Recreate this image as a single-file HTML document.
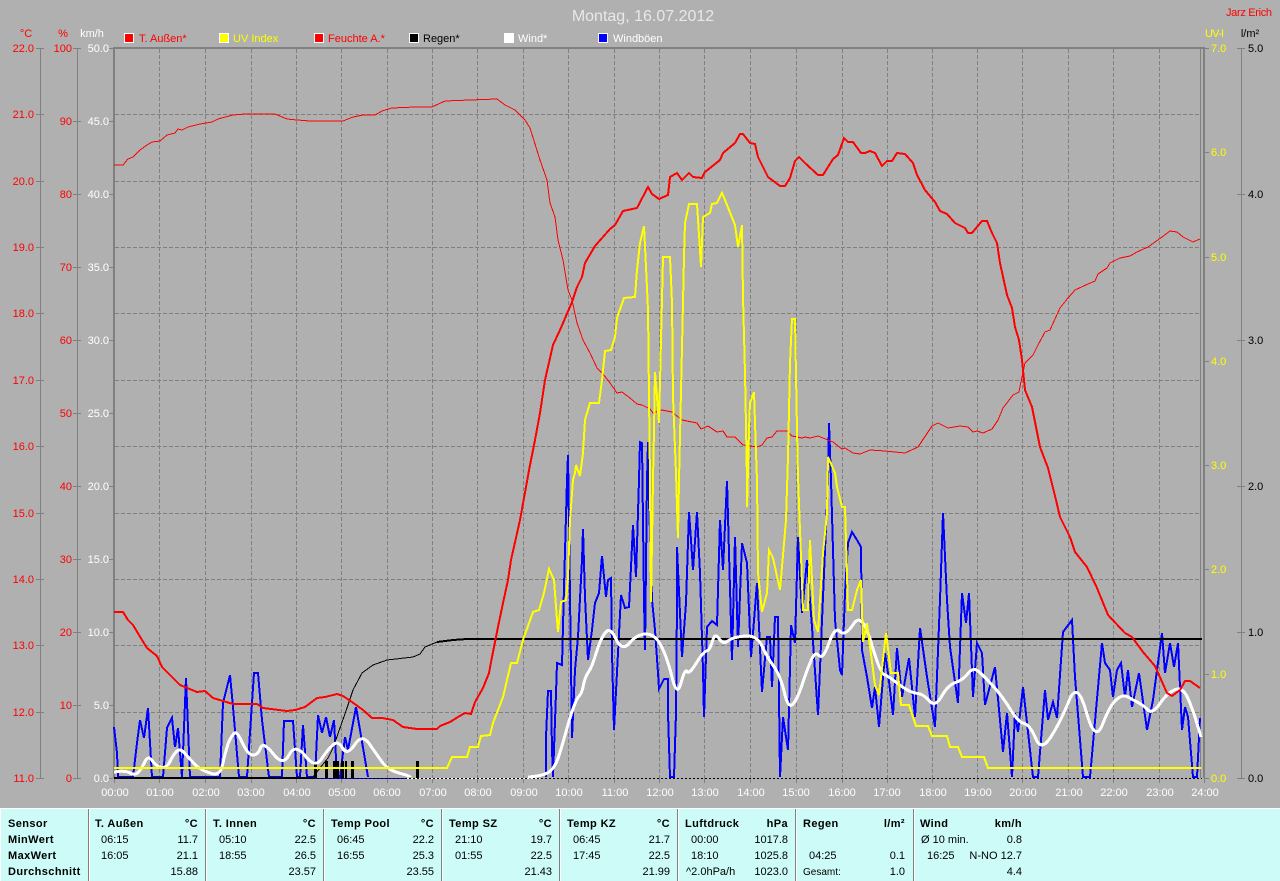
<!DOCTYPE html>
<html><head><meta charset="utf-8"><title>Montag, 16.07.2012</title>
<style>
html,body{margin:0;padding:0;background:#b0b0b0;width:1280px;height:881px;overflow:hidden}
svg{display:block;position:absolute;left:0;top:0}
text{font-family:"Liberation Sans",sans-serif;font-size:11px}
.e{text-anchor:end}.m{text-anchor:middle}
.b{font-weight:bold;letter-spacing:.4px;fill:#000}
.k{fill:#000}
.r{fill:#f00}.w{fill:#fff}.y{fill:#ff0}
polyline{fill:none;stroke-linejoin:miter}
.c{shape-rendering:crispEdges}
</style></head><body>
<svg width="1280" height="881" viewBox="0 0 1280 881" xmlns="http://www.w3.org/2000/svg">
<rect width="1280" height="881" fill="#b0b0b0"/>
<!-- grid -->
<path class="c" stroke="#808080" stroke-width="1" stroke-dasharray="4 2" fill="none" d="M159.5 49V778M205.5 49V778M251.5 49V778M296.5 49V778M341.5 49V778M387.5 49V778M432.5 49V778M477.5 49V778M523.5 49V778M568.5 49V778M614.5 49V778M659.5 49V778M704.5 49V778M750.5 49V778M796.5 49V778M842.5 49V778M887.5 49V778M932.5 49V778M977.5 49V778M1022.5 49V778M1068.5 49V778M1113.5 49V778M1159.5 49V778M115 114.5H1200M115 181.5H1200M115 247.5H1200M115 313.5H1200M115 380.5H1200M115 446.5H1200M115 513.5H1200M115 579.5H1200M115 645.5H1200M115 712.5H1200"/>
<!-- frame + axes -->
<g class="c" fill="#808080">
<rect x="113" y="47" width="1092" height="2"/>
<rect x="113" y="47" width="2" height="731"/>
<rect x="1203" y="47" width="2" height="731"/>
<rect x="1200" y="49" width="1" height="729"/>
<rect x="40" y="48" width="1" height="730"/>
<rect x="77" y="48" width="1" height="730"/>
<rect x="1241" y="48" width="1" height="730"/>
</g>
<path class="c" stroke="#808080" fill="none" d="M36 48.5H44M36 114.5H44M36 181.5H44M36 247.5H44M36 313.5H44M36 380.5H44M36 446.5H44M36 513.5H44M36 579.5H44M36 645.5H44M36 712.5H44M36 778.5H44M73 48.5H81M73 121.5H81M73 194.5H81M73 267.5H81M73 340.5H81M73 413.5H81M73 486.5H81M73 559.5H81M73 632.5H81M73 705.5H81M73 778.5H81M109 48.5H113M109 121.5H113M109 194.5H113M109 267.5H113M109 340.5H113M109 413.5H113M109 486.5H113M109 559.5H113M109 632.5H113M109 705.5H113M109 778.5H113M1205 48.5H1209M1205 152.5H1209M1205 257.5H1209M1205 361.5H1209M1205 465.5H1209M1205 569.5H1209M1205 674.5H1209M1205 778.5H1209M1237 48.5H1245M1237 194.5H1245M1237 340.5H1245M1237 486.5H1245M1237 632.5H1245M1237 778.5H1245M114.5 778V783M159.5 778V783M205.5 778V783M251.5 778V783M296.5 778V783M341.5 778V783M387.5 778V783M432.5 778V783M477.5 778V783M523.5 778V783M568.5 778V783M614.5 778V783M659.5 778V783M704.5 778V783M750.5 778V783M796.5 778V783M842.5 778V783M887.5 778V783M932.5 778V783M977.5 778V783M1022.5 778V783M1068.5 778V783M1113.5 778V783M1159.5 778V783M1204.5 778V783"/>
<!-- blue Windböen -->
<polyline class="c" stroke="#0000ff" stroke-width="2" points="114,727 117,753 118,777 133,777 137,743 140,720 144,738 148,708 152,777 163,777 167,728 172,718 175,747 178,728 182,777 186,678 190,777 220,777 223,703 230,675 233,707 239,777 247,777 254,673 258,673 262,720 269,777 282,777 284,721 293,721 297,777 300,777 303,725 307,777 315,777 318,715 322,733 326,717 330,737 334,720 337,777 340,777 345,737 348,750 356,707 360,730 368,777"/>
<polyline class="c" stroke="#0000ff" stroke-width="2" points="546,777 546,737 548,691 551,691 552,750 553,777 556,693 557,663 562,665 564,587 567,480 568,455 570,597 572,738 575,670 578,637 582,560 583,529 585,597 588,660 592,630 595,603 599,593 602,556 606,597 608,580 611,578 612,653 614,730 618,653 621,595 625,608 629,607 631,567 633,525 636,577 639,480 640,442 642,443 644,600 645,650 647,480 648,442 649,500 652,600 655,630 658,673 659,689 664,679 668,679 668,713 670,777 674,777 676,713 677,603 677,547 682,657 686,603 689,512 691,540 693,570 697,512 700,573 703,670 704,717 707,627 712,621 717,625 720,520 723,570 727,481 732,660 735,537 738,647 742,543 747,563 751,657 753,633 757,583 762,692 767,637 770,637 772,687 775,617 778,617 780,777 783,717 788,750 791,625 795,643 798,537 802,613 807,560 812,627 818,715 823,597 828,480 829,423 831,480 835,620 840,670 842,675 845,593 848,543 852,532 857,540 861,547 862,650 867,677 872,708 875,687 879,727 885,653 888,673 893,715 897,648 902,697 909,658 915,717 920,628 927,677 935,727 940,600 943,513 947,600 950,647 958,703 962,593 966,623 969,593 973,697 977,643 982,653 985,705 995,667 1003,752 1007,713 1012,777 1015,713 1018,732 1023,687 1027,723 1033,777 1038,777 1045,690 1048,720 1053,702 1057,718 1063,632 1072,620 1075,677 1083,777 1090,777 1102,643 1105,663 1110,670 1113,697 1117,670 1121,663 1125,697 1128,670 1132,707 1139,673 1147,730 1153,700 1162,633 1165,673 1170,643 1174,667 1178,643 1182,730 1185,707 1188,717 1193,777 1197,777 1200,718"/>
<!-- baseline -->
<rect class="c" x="114" y="777" width="199" height="2" fill="#000"/>
<rect class="c" x="313" y="778" width="94" height="1" fill="#00f"/>
<rect class="c" x="407" y="778" width="133" height="1" fill="#fff"/>
<path class="c" stroke="#000" stroke-dasharray="2 2" fill="none" d="M313 778.5H1202"/>
<!-- black rain -->
<polyline class="c" stroke="#000" stroke-width="1" points="313,777 320,768 328,758 333,748 340,728 347,708 353,690 362,673 373,665 387,660 413,657 420,654 425,647 437,642"/>
<polyline class="c" stroke="#000" stroke-width="2" points="437,642 453,640 467,639 1202,639"/>
<g class="c" fill="#000"><rect x="314" y="761" width="3" height="17"/><rect x="325" y="761" width="3" height="17"/><rect x="333" y="761" width="6" height="17"/><rect x="341" y="761" width="3" height="17"/><rect x="345" y="761" width="2" height="17"/><rect x="351" y="761" width="3" height="17"/><rect x="416" y="761" width="3" height="17"/></g>
<!-- white Wind -->
<path class="c" stroke="#fff" stroke-width="3" fill="none" d="M114 772Q125 770 130 773Q135 776 138.5 772Q142 768 145 761.5Q148 755 152.5 761Q157 767 162 767.5Q167 768 170 761.5Q173 755 176.5 751.5Q180 748 184 752.5Q188 757 194 763.5Q200 770 210 773Q220 777 222.5 765Q225 753 228.5 742.5Q232 735 234.5 733Q237 731 242.5 743Q248 755 253 755Q258 755 260.5 748Q263 741 273 753.5Q283 767 289 755Q295 743 305 755.5Q315 769 321.5 759Q328 749 333 745Q338 740 342.5 748Q347 756 354.5 745Q362 733 369.5 744Q377 755 382.5 762.5Q388 770 399 773Q410 776 410 777"/>
<path class="c" stroke="#fff" stroke-width="3" fill="none" d="M528 777Q543 776 549 772Q555 768 559 755.5Q563 743 566.5 730Q570 717 573.5 707.5Q577 698 579.5 695.5Q582 693 583.5 685Q585 677 588.5 672Q592 667 596 653.5Q600 640 605 633Q610 626 616 639Q622 652 629.5 643Q637 634 646 634Q655 634 661 645.5Q667 657 672 677Q677 698 681 683Q685 668 687 671.5Q689 675 696 663.5Q703 652 706.5 651Q710 650 712.5 641Q715 632 719 638.5Q723 645 728 641Q733 637 745 636Q757 635 762 646Q767 657 773.5 666Q780 675 784 691Q788 709 792.5 704.5Q797 700 802 685Q807 670 811 660.5Q815 651 819 655.5Q823 660 829 643Q835 626 840 631.5Q845 637 853.5 624Q862 611 871 642Q880 673 884 674.5Q888 676 895 681.5Q902 687 907.5 690Q913 693 918 693.5Q923 694 929 700.5Q935 708 941.5 696.5Q948 685 955.5 682.5Q963 680 968 673.5Q973 667 978 671Q983 675 993 686Q1003 697 1010.5 709.5Q1018 722 1024 723.5Q1030 725 1035.5 738Q1041 752 1050.5 737.5Q1060 723 1068.5 702Q1077 679 1086 711Q1095 744 1102.5 724.5Q1110 705 1116.5 699.5Q1123 694 1128 697Q1133 700 1138 702.5Q1143 705 1147.5 709.5Q1152 715 1160 703.5Q1168 692 1175.5 689.5Q1183 687 1188 698.5Q1193 710 1197 723.5Q1201 737 1201 737"/>
<!-- thin red -->
<polyline class="c" stroke="#f00" stroke-width="1" points="114,165 123,165 128,159 133,157 140,150 147,145 152,142 160,141 167,135 175,133 178,129 182,130 188,127 200,124 212,122 218,119 233,115 245,114 275,114 287,119 297,120 310,121 343,121 353,117 363,115 375,115 382,111 392,108 415,107 432,107 445,101 470,100 497,99 505,105 515,110 525,120 530,128 540,160 547,180 550,203 555,217 558,240 563,260 568,290 572,300 577,323 583,340 590,353 597,368 603,374 610,383 617,393 622,392 630,398 637,404 642,405 650,409 653,413 662,410 672,412 682,420 697,423 701,429 708,426 717,432 723,431 727,437 735,437 743,445 757,447 762,445 767,438 772,437 777,431 787,431 792,436 797,437 802,438 805,437 810,438 818,436 823,438 833,442 842,449 845,448 853,453 860,454 870,450 885,451 905,453 918,447 932,426 938,423 948,428 960,426 968,427 973,432 977,431 983,433 992,429 998,420 1003,408 1013,395 1019,392 1022,377 1025,363 1033,355 1038,345 1045,332 1050,330 1060,308 1068,298 1075,290 1088,284 1095,281 1098,274 1107,268 1110,263 1120,258 1130,256 1137,252 1148,247 1162,237 1170,231 1177,232 1183,237 1193,242 1200,239"/>
<!-- yellow UV -->
<polyline class="c" stroke="#ff0" stroke-width="2" points="114,768 447,768 452,757 467,757 470,747 478,747 481,736 490,735 493,723 503,697 511,663 517,663 523,640 533,612 539,610 544,593 549,569 554,580 557,620 558,632 561,602 566,600 568,577 570,520 573,480 575,473 576,465 580,476 583,453 585,420 587,413 590,403 599,403 602,380 605,351 611,350 615,337 617,318 624,298 635,297 637,270 640,243 644,226 646,267 648,310 650,480 651,602 653,480 654,430 655,372 657,397 659,423 661,340 663,257 670,257 672,303 673,397 676,473 678,538 679,480 682,347 684,257 685,223 689,204 697,204 700,250 701,267 703,217 710,213 712,204 717,203 722,193 725,200 735,225 738,247 742,225 743,297 745,373 747,480 747,507 749,430 750,403 754,392 756,453 757,480 758,573 762,612 767,593 769,550 773,558 780,590 786,520 788,457 790,363 792,319 795,319 797,430 798,477 800,530 803,610 808,610 810,540 814,620 818,632 823,553 827,513 828,457 835,473 837,487 842,507 845,507 848,610 852,610 857,590 861,580 863,642 867,623 875,685 879,695 886,633 891,673 898,673 901,705 909,705 916,726 928,726 932,736 947,736 950,747 958,747 962,757 984,757 988,768 1201,768"/>
<!-- thick red -->
<polyline class="c" stroke="#f00" stroke-width="2" points="114,612 123,612 128,620 133,625 142,640 147,648 157,656 162,667 172,677 180,685 197,692 205,691 213,698 233,704 257,704 263,708 287,711 295,710 305,707 317,698 325,697 337,694 343,696 352,702 363,710 372,718 382,718 393,720 403,727 417,729 437,729 440,726 450,722 458,717 465,713 471,714 475,702 483,688 489,673 492,657 498,627 503,603 508,580 511,560 520,520 530,465 535,440 540,413 545,380 553,345 560,330 572,302 577,287 582,277 585,263 595,246 610,229 615,225 623,211 637,208 648,187 652,194 659,199 668,195 670,177 677,173 682,180 689,173 693,177 702,178 705,172 720,160 723,153 735,143 740,134 743,134 750,143 755,144 758,157 768,177 780,186 785,186 790,178 795,161 799,157 805,163 818,175 823,175 833,159 838,155 844,138 848,142 853,142 861,153 865,153 870,151 875,153 882,166 887,161 892,161 897,153 905,154 913,163 917,175 925,190 935,202 940,211 947,214 955,223 965,228 968,233 972,233 982,221 987,221 992,233 997,243 1000,263 1007,295 1012,308 1015,327 1019,340 1022,360 1025,390 1032,407 1040,447 1048,468 1056,500 1060,517 1070,537 1075,552 1087,567 1097,588 1108,615 1125,633 1132,637 1143,652 1155,666 1167,693 1172,696 1180,690 1185,681 1190,681 1200,688"/>
<!-- legend -->
<g class="c" stroke="#fff" stroke-width="1">
<rect x="124.5" y="33.5" width="9" height="9" fill="#f00"/>
<rect x="219.5" y="33.5" width="9" height="9" fill="#ff0"/>
<rect x="314.5" y="33.5" width="9" height="9" fill="#f00"/>
<rect x="409.5" y="33.5" width="9" height="9" fill="#000"/>
<rect x="504.5" y="33.5" width="9" height="9" fill="#fff"/>
<rect x="598.5" y="33.5" width="9" height="9" fill="#00f"/>
</g>
<text x="139" y="42" class="r">T. Außen*</text>
<text x="233" y="42" class="y">UV Index</text>
<text x="328" y="42" class="r">Feuchte A.*</text>
<text x="423" y="42" class="k">Regen*</text>
<text x="518" y="42" class="w">Wind*</text>
<text x="613" y="42" class="w">Windböen</text>
<!-- headings -->
<text x="643" y="21" class="m" style="font-size:16px;fill:#e8e8e8">Montag, 16.07.2012</text>
<text x="1226" y="16" class="r" textLength="46">Jarz Erich</text>
<text x="26" y="37" class="m r">°C</text>
<text x="63" y="37" class="m r">%</text>
<text x="92" y="37" class="m w">km/h</text>
<text x="1205" y="37" class="y" textLength="19">UV-I</text>
<text x="1250" y="37" class="m k">l/m²</text>
<!-- left axes -->
<g class="r">
<text x="34" y="52" class="e">22.0</text><text x="34" y="118" class="e">21.0</text><text x="34" y="185" class="e">20.0</text><text x="34" y="251" class="e">19.0</text><text x="34" y="317" class="e">18.0</text><text x="34" y="384" class="e">17.0</text><text x="34" y="450" class="e">16.0</text><text x="34" y="517" class="e">15.0</text><text x="34" y="583" class="e">14.0</text><text x="34" y="649" class="e">13.0</text><text x="34" y="716" class="e">12.0</text><text x="34" y="782" class="e">11.0</text>
<text x="72" y="52" class="e">100</text><text x="72" y="125" class="e">90</text><text x="72" y="198" class="e">80</text><text x="72" y="271" class="e">70</text><text x="72" y="344" class="e">60</text><text x="72" y="417" class="e">50</text><text x="72" y="490" class="e">40</text><text x="72" y="563" class="e">30</text><text x="72" y="636" class="e">20</text><text x="72" y="709" class="e">10</text><text x="72" y="782" class="e">0</text>
</g>
<g class="w">
<text x="109" y="52" class="e">50.0</text><text x="109" y="125" class="e">45.0</text><text x="109" y="198" class="e">40.0</text><text x="109" y="271" class="e">35.0</text><text x="109" y="344" class="e">30.0</text><text x="109" y="417" class="e">25.0</text><text x="109" y="490" class="e">20.0</text><text x="109" y="563" class="e">15.0</text><text x="109" y="636" class="e">10.0</text><text x="109" y="709" class="e">5.0</text><text x="109" y="782" class="e">0.0</text>
</g>
<g class="y">
<text x="1211" y="52">7.0</text><text x="1211" y="156">6.0</text><text x="1211" y="261">5.0</text><text x="1211" y="365">4.0</text><text x="1211" y="469">3.0</text><text x="1211" y="573">2.0</text><text x="1211" y="678">1.0</text><text x="1211" y="782">0.0</text>
</g>
<g class="k">
<text x="1248" y="52">5.0</text><text x="1248" y="198">4.0</text><text x="1248" y="344">3.0</text><text x="1248" y="490">2.0</text><text x="1248" y="636">1.0</text><text x="1248" y="782">0.0</text>
</g>
<!-- x labels -->
<g class="w">
<text x="115" y="796" class="m">00:00</text><text x="160" y="796" class="m">01:00</text><text x="206" y="796" class="m">02:00</text><text x="251" y="796" class="m">03:00</text><text x="297" y="796" class="m">04:00</text><text x="342" y="796" class="m">05:00</text><text x="387" y="796" class="m">06:00</text><text x="433" y="796" class="m">07:00</text><text x="478" y="796" class="m">08:00</text><text x="524" y="796" class="m">09:00</text><text x="569" y="796" class="m">10:00</text><text x="615" y="796" class="m">11:00</text><text x="660" y="796" class="m">12:00</text><text x="705" y="796" class="m">13:00</text><text x="751" y="796" class="m">14:00</text><text x="796" y="796" class="m">15:00</text><text x="842" y="796" class="m">16:00</text><text x="887" y="796" class="m">17:00</text><text x="933" y="796" class="m">18:00</text><text x="978" y="796" class="m">19:00</text><text x="1023" y="796" class="m">20:00</text><text x="1069" y="796" class="m">21:00</text><text x="1114" y="796" class="m">22:00</text><text x="1160" y="796" class="m">23:00</text><text x="1205" y="796" class="m">24:00</text>
</g>
<!-- panel -->
<rect class="c" x="0" y="808" width="1280" height="73" fill="#ccfbf8"/>
<rect class="c" x="0" y="808" width="1280" height="1" fill="#fff"/>
<rect class="c" x="0" y="808" width="1" height="73" fill="#fff"/>
<g class="c" fill="#808080"><rect x="88" y="809" width="1" height="72"/><rect x="205" y="809" width="1" height="72"/><rect x="323" y="809" width="1" height="72"/><rect x="441" y="809" width="1" height="72"/><rect x="559" y="809" width="1" height="72"/><rect x="677" y="809" width="1" height="72"/><rect x="795" y="809" width="1" height="72"/><rect x="913" y="809" width="1" height="72"/></g>
<g class="c" fill="#fff"><rect x="89" y="809" width="1" height="72"/><rect x="206" y="809" width="1" height="72"/><rect x="324" y="809" width="1" height="72"/><rect x="442" y="809" width="1" height="72"/><rect x="560" y="809" width="1" height="72"/><rect x="678" y="809" width="1" height="72"/><rect x="796" y="809" width="1" height="72"/><rect x="914" y="809" width="1" height="72"/></g>
<text x="8" y="827" class="b">Sensor</text><text x="8" y="843" class="b">MinWert</text><text x="8" y="859" class="b">MaxWert</text><text x="8" y="875" class="b">Durchschnitt</text>
<g class="k">
<text x="95" y="827" class="b">T. Außen</text><text x="198" y="827" class="b e">°C</text>
<text x="101" y="843">06:15</text><text x="198" y="843" class="e">11.7</text><text x="101" y="859">16:05</text><text x="198" y="859" class="e">21.1</text><text x="198" y="875" class="e">15.88</text>
<text x="213" y="827" class="b">T. Innen</text><text x="316" y="827" class="b e">°C</text>
<text x="219" y="843">05:10</text><text x="316" y="843" class="e">22.5</text><text x="219" y="859">18:55</text><text x="316" y="859" class="e">26.5</text><text x="316" y="875" class="e">23.57</text>
<text x="331" y="827" class="b">Temp Pool</text><text x="434" y="827" class="b e">°C</text>
<text x="337" y="843">06:45</text><text x="434" y="843" class="e">22.2</text><text x="337" y="859">16:55</text><text x="434" y="859" class="e">25.3</text><text x="434" y="875" class="e">23.55</text>
<text x="449" y="827" class="b">Temp SZ</text><text x="552" y="827" class="b e">°C</text>
<text x="455" y="843">21:10</text><text x="552" y="843" class="e">19.7</text><text x="455" y="859">01:55</text><text x="552" y="859" class="e">22.5</text><text x="552" y="875" class="e">21.43</text>
<text x="567" y="827" class="b">Temp KZ</text><text x="670" y="827" class="b e">°C</text>
<text x="573" y="843">06:45</text><text x="670" y="843" class="e">21.7</text><text x="573" y="859">17:45</text><text x="670" y="859" class="e">22.5</text><text x="670" y="875" class="e">21.99</text>
<text x="685" y="827" class="b">Luftdruck</text><text x="788" y="827" class="b e">hPa</text>
<text x="691" y="843">00:00</text><text x="788" y="843" class="e">1017.8</text><text x="691" y="859">18:10</text><text x="788" y="859" class="e">1025.8</text><text x="686" y="875">^2.0hPa/h</text><text x="788" y="875" class="e">1023.0</text>
<text x="803" y="827" class="b">Regen</text><text x="905" y="827" class="b e">l/m²</text>
<text x="809" y="859">04:25</text><text x="905" y="859" class="e">0.1</text><text x="803" y="875" style="font-size:10px">Gesamt:</text><text x="905" y="875" class="e">1.0</text>
<text x="920" y="827" class="b">Wind</text><text x="1022" y="827" class="b e">km/h</text>
<text x="921" y="843">Ø 10 min.</text><text x="1022" y="843" class="e">0.8</text><text x="927" y="859">16:25</text><text x="1022" y="859" class="e">N-NO 12.7</text><text x="1022" y="875" class="e">4.4</text>
</g>
</svg>
</body></html>
